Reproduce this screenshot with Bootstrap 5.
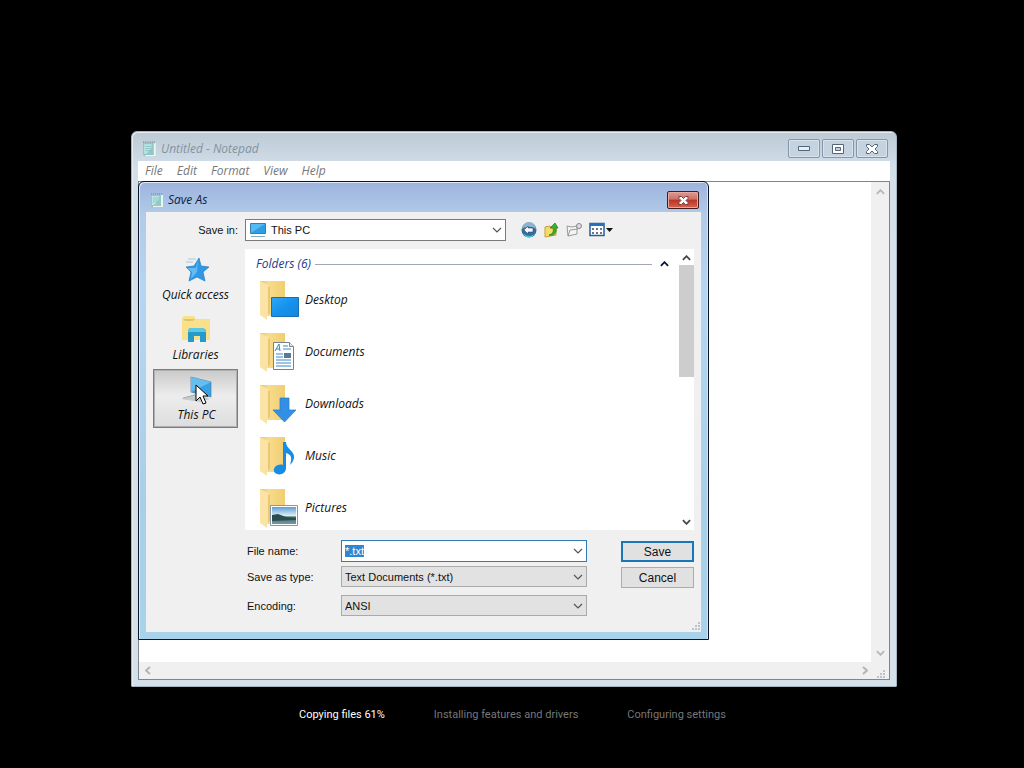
<!DOCTYPE html>
<html lang="en">
<head>
<meta charset="utf-8">
<meta name="viewport" content="width=device-width, initial-scale=1">
<title>Untitled - Notepad</title>
<link href="https://cdn.jsdelivr.net/npm/bootstrap@5.3.0/dist/css/bootstrap.min.css" rel="stylesheet">
<style>
body{background:#000;font-family:"Liberation Sans",sans-serif;font-size:11px;line-height:16px;color:#111;padding:131px 127px 0 131px}
button,select,input{font:inherit;color:inherit}
svg{display:block;flex:none}
.ui{font-family:"Open Sans","Noto Sans",sans-serif;font-style:italic;font-size:12px;line-height:16px}
.notepad{flex:0 0 calc(100vh - 212px);min-height:540px;border:1px solid #a5b4c0;border-radius:6px 6px 1px 1px;background:linear-gradient(#bccad6,#d3dfe9 36px,#d5e1ea);padding:0 6px 6px;box-shadow:inset 1px 1px #e6edf3}
.titlebar{height:29px}
.notepad>.titlebar{color:#8592a0;padding:4px 2px 0 4px}
.capbtns{gap:2px}
.capbtn{width:32px;height:19px;border:1px solid #8496ab;border-radius:2px;background:#c5d3e0;box-shadow:inset 0 0 0 1px #d8e2ec;padding:0}
.menus{height:20px;background:#fff;padding:0 7px;gap:14px}
.menus a{color:#777;text-decoration:none}
.editor{border:1px solid #7c868e;min-height:0}
.editor textarea{border:0;resize:none;outline:0;min-width:0}
.track{background:#f0f0f0;width:18px;padding:7px 0 6px;color:#b5b5b5}
.htrack{background:#f0f0f0;height:17px;padding:0 4px 0 6px;color:#b5b5b5}
.dialogwin{left:6px;right:187px;top:49px;border:1px solid #0c1626;border-radius:6px 6px 0 0;padding:0 7px 7px;background:linear-gradient(#9db3df,#b1cae7 31px,#b5d6f2 110px,#a9cfe8 70%,#a8d3ea);box-shadow:inset 1px 1px #dce9f7,inset -1px 0 #c7e8fa}
.dialogwin>.titlebar{height:30px;color:#101e38;padding:6px 2px 0 4px}
.closebtn{width:32px;height:18px;border:1px solid #431b20;border-radius:2px;padding:0;background:linear-gradient(#dc9b93,#cd7166 45%,#b93323 50%,#d66452);box-shadow:inset 0 0 0 1px #e9a79d}
.sheet{background:#f0f0f0;padding:7px 7px 16px}
.savein{height:22px}
.savein label{width:92px;text-align:right;padding-right:7px}
.combo{border:1px solid #7a7a7a;border-radius:0;outline:0;appearance:none;background:#fff url("data:image/svg+xml,%3Csvg xmlns='http://www.w3.org/2000/svg' width='10' height='6'%3E%3Cpath d='M1 1l4 4 4-4' fill='none' stroke='%23555' stroke-width='1.2'/%3E%3C/svg%3E") no-repeat right 3px center;padding:0 16px 0 3px}
.place-combo{width:261px;height:22px;padding-left:25px}
.tool{border:0;background:none;padding:0}
.tools{gap:7px;margin-left:15px}
.places{width:85px;margin-right:7px}
.place{border:1px solid transparent;background:none;height:60px;padding:5px 0 0;gap:4px}
.place.on{height:59px;border-color:#7c7c7c;box-shadow:inset 0 0 0 1px #b0b0b0;background:linear-gradient(#c9c9c9,#ededed 45%,#ddd);padding:6px 0 0 2px}
.files{background:#fff;height:281px}
.filelist{padding:5px 10px 0 11px;overflow:hidden}
.grouphead{color:#26378c;height:20px}
.grouphead hr{border:0;border-top:1px solid #a0a6b4;opacity:1;margin:0}
.entry{height:52px;gap:5px;color:#111;text-decoration:none}
.fscroll{width:15px;padding:6px 0 5px}
.fscroll .thumb{background:#cdcdcd;height:112px;width:15px;margin-top:4px}
.fields{display:grid;grid-template-columns:94px minmax(0,246px);margin-left:94px;padding-top:10px;align-items:center}
.fields .combo{height:21px;width:100%;background-color:#e2e2e2;border-color:#aaa}
.fields .combo.name{height:22px;background-color:#fff;border-color:#3079b5}
.actions{padding-top:11px;gap:5px}
.wbtn{border:1px solid #b0aca2;background:#e1e1e1;height:21px;padding:0;width:73px;font-size:12px}
.wbtn.main{border:2px solid #1977b9}
.name::selection{background:#3186d0;color:#fff}
.grip{right:8px;bottom:8px}
.stages{font-family:Roboto,sans-serif;font-size:11px;line-height:18px;color:#777;padding:19px 0 0 168px;gap:49px}
</style>
</head>
<body class="d-flex flex-column min-vh-100">
<svg width="0" height="0" class="position-absolute" aria-hidden="true">
 <defs>
  <linearGradient id="gy" x2="1"><stop stop-color="#e9c766"/><stop offset=".35" stop-color="#f8dc8c"/><stop offset="1" stop-color="#f0cd70"/></linearGradient>
  <linearGradient id="gb" x2="1" y2="1"><stop stop-color="#2fa8f4"/><stop offset=".5" stop-color="#1592ee"/><stop offset="1" stop-color="#1686dc"/></linearGradient>
  <linearGradient id="gs" y2="1" x2="0"><stop stop-color="#5b9fd8"/><stop offset=".5" stop-color="#dcebf4"/><stop offset=".6" stop-color="#44705f"/><stop offset="1" stop-color="#7697aa"/></linearGradient>
  <symbol id="folder" viewBox="0 0 40 40"><path d="M1 1h25v35H7z" fill="url(#gy)"/><path d="M1 1l10 5v28l-3 2v4l-7-5z" fill="#fae3a4"/><path d="M11 6v27l-2 2V7z" fill="#e8c873"/></symbol>
  <symbol id="note" viewBox="0 0 14 16"><path d="M1 3h10l2 1v11H3l-2-1z" fill="#8aa3a8"/><path d="M1 3h10v11H1z" fill="#90cbca"/><path d="M2 4h7v4L4 13H2z" fill="#bce6e2"/><path d="M11 3h2v12H3v-1h8z" fill="#edf5f3"/><path d="M1 2h11" stroke="#67848a" stroke-dasharray="1 1"/><path d="M3 6h6M3 8h6M3 10h6" stroke="#77b2b5" stroke-width=".6"/></symbol>
  <symbol id="up" viewBox="0 0 10 6"><path d="M1 5l4-4 4 4" fill="none" stroke="currentColor" stroke-width="2"/></symbol>
  <symbol id="grip" viewBox="0 0 9 9"><path d="M7 0h2v2H7zM4 3h2v2H4zM7 3h2v2H7zM1 6h2v2H1zM4 6h2v2H4zM7 6h2v2H7z" fill="#bfc2c8"/></symbol>
 </defs>
</svg>

<main class="notepad position-relative d-flex flex-column">
 <header class="titlebar ui d-flex align-items-center flex-shrink-0">
  <svg width="15" height="17"><use href="#note"/></svg>
  <span class="ms-1 me-auto">Untitled - Notepad</span>
  <div class="capbtns d-flex">
   <button class="capbtn d-grid justify-content-center align-content-center" aria-label="Minimize"><svg width="12" height="6"><path d="M.5.5h11v4H.5z" fill="#e8eef4" stroke="#53657b"/></svg></button>
   <button class="capbtn d-grid justify-content-center align-content-center" aria-label="Maximize"><svg width="12" height="10"><path d="M.5.5h11v9H.5z" fill="#fff" stroke="#53657b"/><path d="M3.500 3.500h5v3h-5z" fill="#c5d3e0" stroke="#53657b"/></svg></button>
   <button class="capbtn d-grid justify-content-center align-content-center" aria-label="Close"><svg width="12" height="10"><path d="M.5.5h3L6 3 8.500.5h3v2L9 5l2.500 2.500v2h-3L6 7 3.500 9.500h-3v-2L3 5 .5 2.500z" fill="#fff" stroke="#53657b"/></svg></button>
  </div>
 </header>
 <nav class="menus ui d-flex align-items-center flex-shrink-0"><a href="#">File</a><a href="#">Edit</a><a href="#">Format</a><a href="#">View</a><a href="#">Help</a></nav>
 <section class="editor flex-grow-1 d-flex flex-column">
  <div class="d-flex flex-grow-1"><textarea class="flex-grow-1" aria-label="Document text"></textarea>
   <div class="track d-flex flex-column align-items-center justify-content-between"><svg width="9" height="6"><use href="#up"/></svg><svg width="9" height="6" transform="rotate(180)"><use href="#up"/></svg></div></div>
  <div class="htrack d-flex align-items-center justify-content-between">
   <svg width="6" height="9"><path d="M5 1L1 4.500 5 8" fill="none" stroke="currentColor" stroke-width="2"/></svg>
   <svg class="ms-auto me-2" width="6" height="9"><path d="M1 1l4 3.500L1 8" fill="none" stroke="currentColor" stroke-width="2"/></svg>
   <svg class="mt-2" width="9" height="9"><use href="#grip"/></svg></div>
 </section>

 <section class="dialogwin position-absolute" role="dialog" aria-label="Save As">
  <header class="titlebar ui d-flex align-items-center"><svg width="14" height="16"><use href="#note"/></svg><span class="ms-1 me-auto">Save As</span>
   <button class="closebtn d-grid justify-content-center align-content-center" aria-label="Close dialog"><svg width="11" height="9"><path d="M1 .5h2.500l2 2 2-2H10v2l-2 2 2 2v2H7.500l-2-2-2 2H1v-2l2-2-2-2z" fill="#fff" stroke="#73404a"/></svg></button></header>
  <div class="sheet">
   <div class="savein d-flex align-items-center">
    <label for="savein">Save in:</label>
    <div class="position-relative"><select id="savein" class="combo place-combo"><option>This PC</option></select>
     <svg class="position-absolute top-0 start-0 ms-1 mt-1 pe-none" width="18" height="15"><path d="M1.500.5h15v10h-15z" fill="#55b9f4" stroke="#397ea8"/><path d="M2 10L16 1v9z" fill="#2d9de4"/><path d="M2 13h14v1H2z" fill="#87aec1"/></svg></div>
    <div class="tools d-flex align-items-center">
     <button class="tool" aria-label="Back"><svg width="16" height="16"><circle cx="8" cy="8" r="7.500" fill="#396b98"/><path d="M1 7a7 7 0 0 1 14 0c-4-3-10-3-14 0" fill="#8bb4d0"/><path d="M2 11c4 4 9 4 12 0l-3 4H5z" fill="#42c6e1"/><path d="M3 8l4-4v2h5v4H7v2z" fill="#fff" stroke="#235080" stroke-width=".6"/></svg></button>
     <button class="tool" aria-label="Up one level"><svg width="15" height="16"><path d="M1 5l5-1 1 2 5-1v8L1 15z" fill="#f6db69" stroke="#c6a139"/><path d="M5 13c4-1 5-4 4-7H6l5-5 3 5h-2c1 5-2 8-7 7" fill="#36b42a" stroke="#21771d" stroke-width=".7"/></svg></button>
     <button class="tool" aria-label="Create folder"><svg width="16" height="16"><path d="M1 4l5 1 5-1v8L2 14zM2 14l2-6 8-1" fill="#f4f4f4" stroke="#999"/><circle cx="13" cy="4" r="2.500" fill="#ddd" stroke="#888"/></svg></button>
     <button class="tool" aria-label="View menu"><svg width="25" height="16"><path d="M1 1.500h14v12H1z" fill="#fff" stroke="#245c9d" stroke-width="1.500"/><path d="M1 1h14v3H1z" fill="#2970bb"/><path d="M3 6h2v2H3zm4 0h2v2H7zm4 0h2v2h-2zM3 10h2v2H3zm4 0h2v2H7zm4 0h2v2h-2z" fill="#64788a"/><path d="M17 6h7l-3.500 4z" fill="#111"/></svg></button>
    </div>
   </div>
   <div class="d-flex mt-2">
    <nav class="places ui d-flex flex-column" aria-label="Places">
     <button class="place ui d-flex flex-column align-items-center"><svg width="28" height="28" viewBox="0 0 28 28"><path d="M17 3l2 8 8 1-6 5 2 9-8-4-8 4 2-9-5-5 8-1z" fill="#2e99e7" stroke="#2178bd" stroke-width=".7"/><path d="M16 4l-2 9-9 0 5 4-1 7 6-7z" fill="#63baf5"/><path d="M6 4h8M4 7h7" stroke="#a7c6df"/></svg>Quick access</button>
     <button class="place ui d-flex flex-column align-items-center"><svg width="28" height="28" viewBox="0 0 28 28"><path d="M0 3l2-2h10l2 3h14v21H0z" fill="#f9e08a"/><path d="M1 4h12l-2 2H3z" fill="#dcc66c"/><path d="M6 15l2-2h13l3 2v12h-6v-6h-6v6H6z" fill="#269bca"/><path d="M6 15l2-2h13l3 2v2H6z" fill="#5cc8e8"/></svg>Libraries</button>
     <button class="place on ui d-flex flex-column align-items-center position-relative"><svg width="34" height="27" viewBox="0 0 34 27"><path d="M1 23l15-5 14 5-10 3z" fill="#c6cacc"/><path d="M3 22l12-3" stroke="#aaa"/><path d="M11 1l20 5v15l-20-5z" fill="#38a1e3" stroke="#507d9d" stroke-width=".7"/><path d="M11 1l20 5-20 10z" fill="#65bdf0"/></svg>This PC
      <svg class="position-absolute pe-none" style="left:41px;top:14px" width="13" height="22"><path d="M1 1v16l4-4 3 7 3-1-3-7h5z" fill="#fff" stroke="#000"/></svg></button>
    </nav>
    <div class="files flex-grow-1 d-flex">
     <div class="filelist flex-grow-1 ui">
      <div class="grouphead d-flex align-items-center"><span>Folders (6)</span><hr class="flex-grow-1 ms-1 me-2"><svg style="color:#08133a" width="9" height="6"><use href="#up"/></svg></div>
      <a class="entry d-flex align-items-center" href="#"><svg width="44" height="40"><use href="#folder" x="3" width="40" height="40"/><path d="M15.500 17.500h27v19h-27z" fill="url(#gb)" stroke="#176db3"/></svg>Desktop</a>
      <a class="entry d-flex align-items-center" href="#"><svg width="44" height="40"><use href="#folder" x="3" width="40" height="40"/><path d="M17.500 10.500h16l4 4v23h-20z" fill="#fff" stroke="#7a8087"/><path d="M33.500 10.500v4h4" fill="#e6ecf0" stroke="#7a8087"/><path d="M19 19l4-7 1 7M20 17h4M27 14h5M27 17h8M20 22h7M20 25h7M20 28h15M20 31h15M20 34h15" fill="none" stroke="#3b87c4"/><path d="M28 21h7v5h-7z" fill="#557b99"/></svg>Documents</a>
      <a class="entry d-flex align-items-center" href="#"><svg width="44" height="40"><use href="#folder" x="3" width="40" height="40"/><path d="M24 14h9v12h7L28.500 38 17 26h7z" fill="#338fe6" stroke="#2479c8" stroke-width=".7"/></svg>Downloads</a>
      <a class="entry d-flex align-items-center" href="#"><svg width="44" height="40"><use href="#folder" x="3" width="40" height="40"/><path d="M27 6h3c0 7 9 9 8 16-1 4-3 6-4 7 2-7 2-10-4-12v15c0 6-7 8-11 5-4-5 3-10 8-8z" fill="#168ce5"/></svg>Music</a>
      <a class="entry d-flex align-items-center" href="#"><svg width="44" height="40"><use href="#folder" x="3" width="40" height="40"/><path d="M14.500 17.500h27v20h-27z" fill="#fff" stroke="#8b95a5"/><path d="M16 19h24v17H16z" fill="url(#gs)"/><path d="M16 27l6-1 8 3 10 1v2l-24 1z" fill="#2a4d52"/></svg>Pictures</a>
     </div>
     <div class="fscroll d-flex flex-column align-items-center" style="color:#444"><svg width="9" height="6"><use href="#up"/></svg><div class="thumb"></div><svg class="mt-auto" width="9" height="6" transform="rotate(180)"><use href="#up"/></svg></div>
    </div>
   </div>
   <div class="d-flex justify-content-between">
    <div class="fields flex-grow-1">
     <label for="fname">File name:</label><input id="fname" class="combo name" value="*.txt">
     <label class="mt-1" for="ftype">Save as type:</label><select id="ftype" class="combo mt-1"><option>Text Documents (*.txt)</option></select>
     <label class="mt-2" for="enc">Encoding:</label><select id="enc" class="combo mt-2"><option>ANSI</option></select>
    </div>
    <div class="actions d-flex flex-column"><button class="wbtn main">Save</button><button class="wbtn">Cancel</button></div>
   </div>
  </div>
  <svg class="grip position-absolute" width="9" height="9"><use href="#grip"/></svg>
 </section>
</main>
<footer class="stages d-flex flex-wrap"><span class="text-white">Copying files 61%</span><span>Installing features and drivers</span><span>Configuring settings</span></footer>
<script src="https://cdn.jsdelivr.net/npm/bootstrap@5.3.0/dist/js/bootstrap.bundle.min.js"></script>
<script>
const nameBox = document.getElementById('fname');
nameBox.focus();
nameBox.select();
</script>
</body>
</html>
